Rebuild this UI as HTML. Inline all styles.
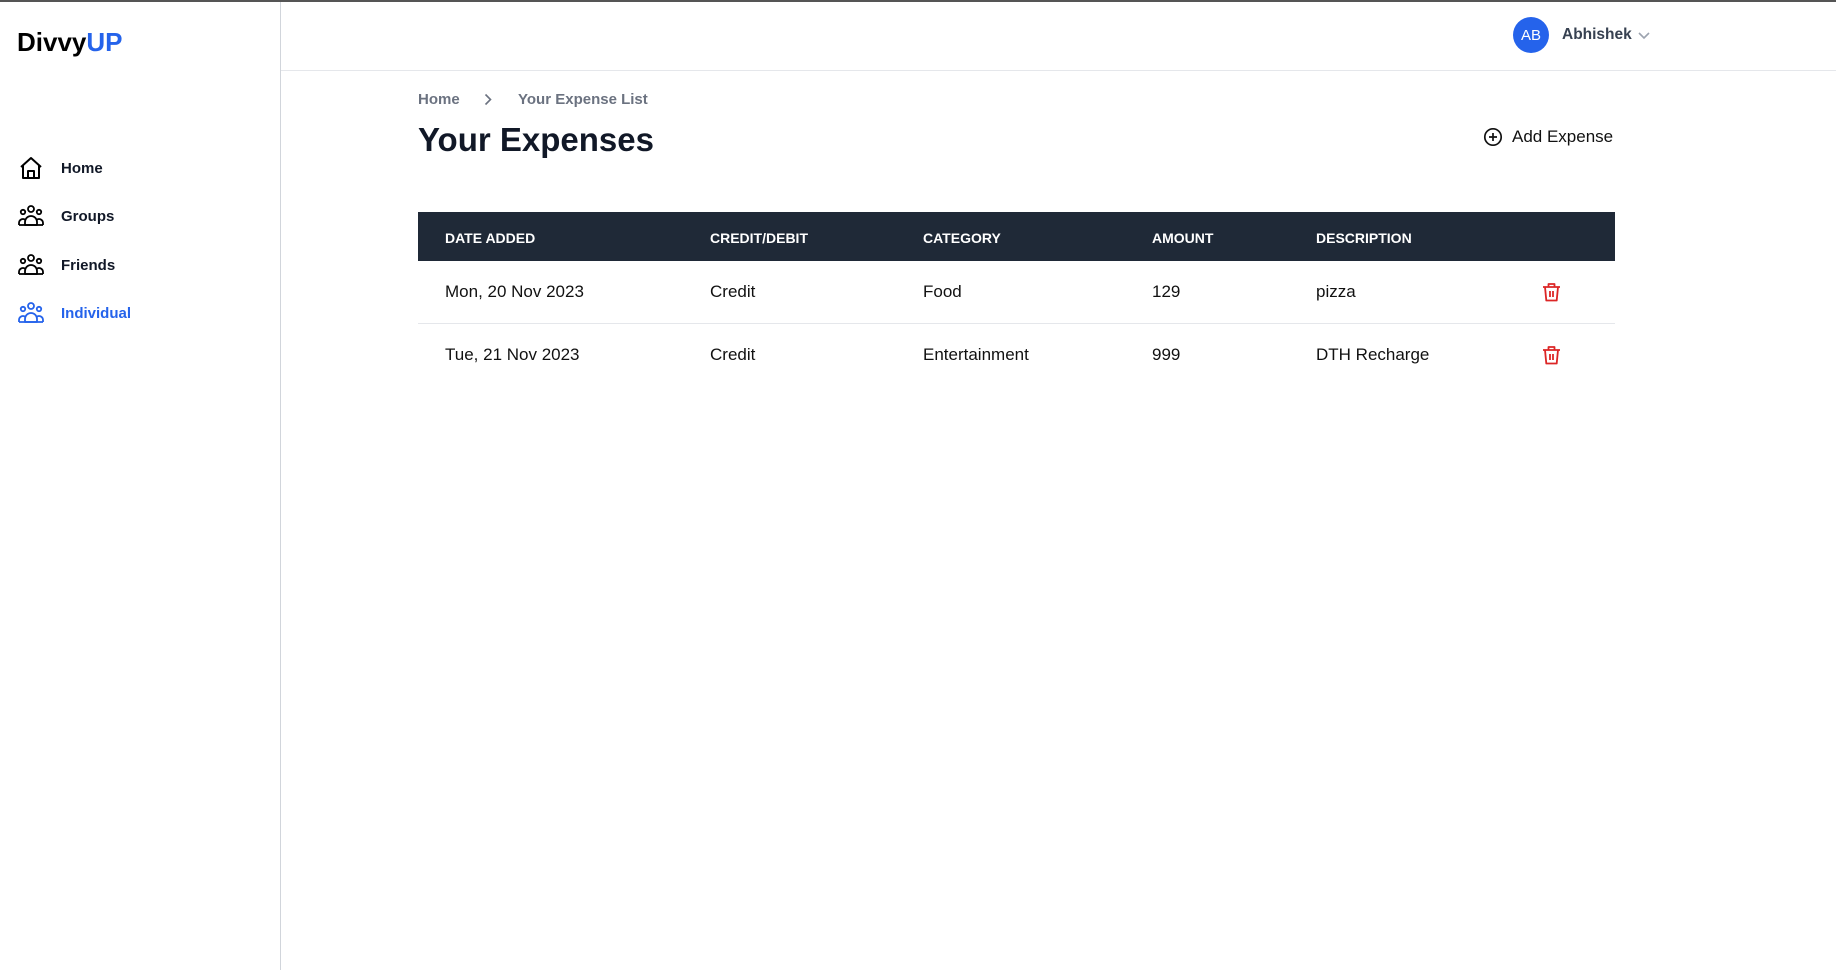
<!DOCTYPE html>
<html><head><meta charset="utf-8"><style>
*{margin:0;padding:0;box-sizing:border-box}
html,body{width:1836px;height:970px;overflow:hidden;background:#fff;font-family:"Liberation Sans",sans-serif;color:#111827}
.topline{position:absolute;left:0;top:0;width:1836px;height:2px;background:#555}
.side{position:absolute;left:0;top:2px;width:281px;height:968px;border-right:1px solid #d1d5db}
.logo{position:absolute;left:17px;top:25px;font-size:26px;font-weight:bold;color:#000}
.logo span{color:#2563eb}
.nav{position:absolute;left:18px;font-size:15px;font-weight:bold;display:flex;align-items:center;height:26px}
.nav svg{width:26px;height:26px;margin-right:17px}
.hdr{position:absolute;left:281px;top:2px;right:0;height:69px;border-bottom:1px solid #e5e7eb}
.av{position:absolute;left:1513px;top:17px;width:36px;height:36px;border-radius:50%;background:#2563eb;color:#fff;font-size:15px;display:flex;align-items:center;justify-content:center}
.uname{position:absolute;left:1562px;top:26px;font-size:15.5px;font-weight:bold;color:#374151}
.bc{position:absolute;top:91px;font-size:15px;color:#6b7280;font-weight:bold}
.title{position:absolute;left:418px;top:121px;font-size:33px;font-weight:bold;color:#111827}
.add{position:absolute;left:1483px;top:127px;font-size:17px;display:flex;align-items:center;color:#111}
.add svg{margin-right:9px}
.th{position:absolute;left:418px;top:212px;width:1197px;height:49px;background:#1f2937}
.th div{position:absolute;top:18px;color:#fff;font-size:14px;font-weight:bold}
.cell{position:absolute;font-size:17px;color:#111}
.div{position:absolute;left:418px;width:1197px;height:1px;background:#e5e7eb}
</style></head><body>
<div class="topline"></div>
<div class="side">
<div class="logo">Divvy<span>UP</span></div>
</div>
<svg width="0" height="0" style="position:absolute"><defs>
<g id="grp" fill="none" stroke-width="1.8" stroke-linejoin="round"><circle cx="13" cy="6" r="3"/><circle cx="5" cy="9" r="2.2"/><circle cx="21" cy="9" r="2.2"/><path d="M7 22v-3a6 6 0 0 1 12 0v3z"/><path d="M1 22v-2a4 4 0 0 1 6-3.4M25 22v-2a4 4 0 0 0-6-3.4"/><path d="M1 22h24"/></g>
</defs></svg>
<div class="nav" style="top:155px"><svg viewBox="0 0 26 26" fill="none" stroke="#000" stroke-width="2" stroke-linejoin="round"><path d="M3 12L13 3l10 9M5 10v13h16V10M10 23v-7h6v7"/></svg>Home</div>
<div class="nav" style="top:203px"><svg viewBox="0 0 26 26" stroke="#000"><use href="#grp"/></svg>Groups</div>
<div class="nav" style="top:252px"><svg viewBox="0 0 26 26" stroke="#000"><use href="#grp"/></svg>Friends</div>
<div class="nav" style="top:300px;color:#2563eb"><svg viewBox="0 0 26 26" stroke="#2563eb"><use href="#grp"/></svg>Individual</div>
<div class="hdr"></div>
<div class="av">AB</div>
<div class="uname">Abhishek</div>
<svg style="position:absolute;left:1638px;top:32px" width="12" height="8" viewBox="0 0 12 8"><path d="M1 1l5 5 5-5" fill="none" stroke="#9ca3af" stroke-width="1.6"/></svg>
<div class="bc" style="left:418px">Home</div>
<svg style="position:absolute;left:484px;top:93px" width="8" height="13" viewBox="0 0 8 13"><path d="M1.5 1.5l5 5-5 5" fill="none" stroke="#6b7280" stroke-width="1.6"/></svg>
<div class="bc" style="left:518px">Your Expense List</div>
<div class="title">Your Expenses</div>
<div class="add"><svg width="20" height="20" viewBox="0 0 20 20" fill="none" stroke="#111" stroke-width="1.7"><circle cx="10" cy="10" r="8.2"/><path d="M10 6v8M6 10h8"/></svg>Add Expense</div>
<div class="th">
<div style="left:27px">DATE ADDED</div><div style="left:292px">CREDIT/DEBIT</div><div style="left:505px">CATEGORY</div><div style="left:734px">AMOUNT</div><div style="left:898px">DESCRIPTION</div>
</div>
<div class="cell" style="left:445px;top:282px">Mon, 20 Nov 2023</div>
<div class="cell" style="left:710px;top:282px">Credit</div>
<div class="cell" style="left:923px;top:282px">Food</div>
<div class="cell" style="left:1152px;top:282px">129</div>
<div class="cell" style="left:1316px;top:282px">pizza</div>
<div class="div" style="top:323px"></div>
<div class="cell" style="left:445px;top:345px">Tue, 21 Nov 2023</div>
<div class="cell" style="left:710px;top:345px">Credit</div>
<div class="cell" style="left:923px;top:345px">Entertainment</div>
<div class="cell" style="left:1152px;top:345px">999</div>
<div class="cell" style="left:1316px;top:345px">DTH Recharge</div>
<svg style="position:absolute;left:1542px;top:282px" width="19" height="20" viewBox="0 0 19 20" fill="none" stroke="#dc2626" stroke-width="1.8" stroke-linejoin="round"><path d="M1 5h17M6.5 5V2h6v3M3 5l1.3 13.5h10.4L16 5M8 9v6M11 9v6"/></svg>
<svg style="position:absolute;left:1542px;top:345px" width="19" height="20" viewBox="0 0 19 20" fill="none" stroke="#dc2626" stroke-width="1.8" stroke-linejoin="round"><path d="M1 5h17M6.5 5V2h6v3M3 5l1.3 13.5h10.4L16 5M8 9v6M11 9v6"/></svg>
</body></html>
